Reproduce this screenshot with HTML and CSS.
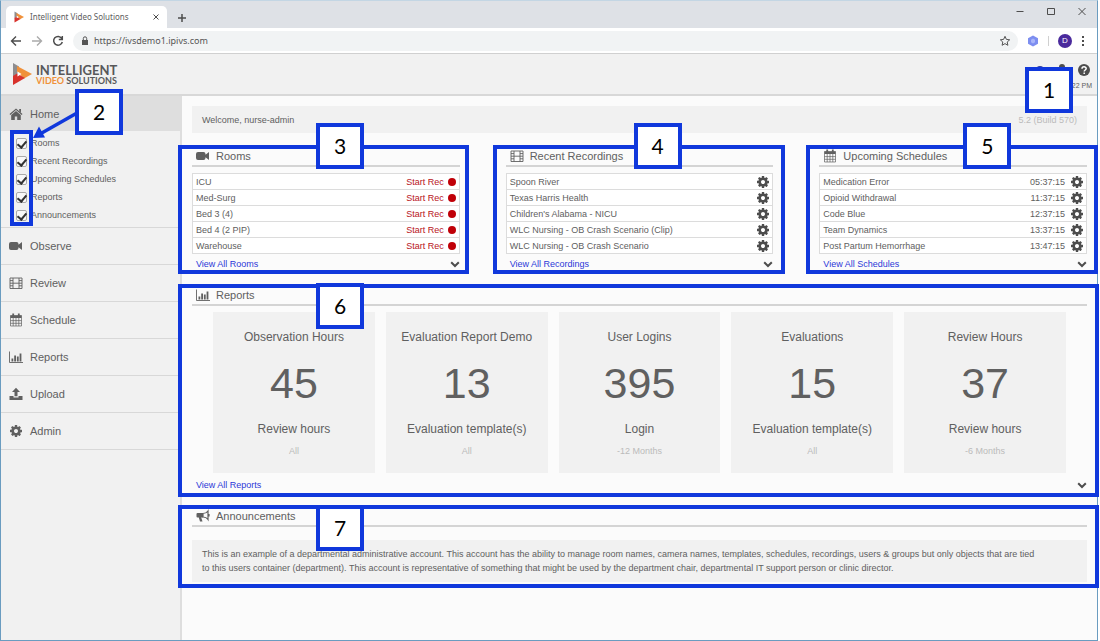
FILE: index.html
```html
<!DOCTYPE html>
<html lang="en">
<head>
<meta charset="utf-8">
<title>Intelligent Video Solutions</title>
<link rel="stylesheet" href="styles.css">
</head>
<body>
<svg class="defs" aria-hidden="true">
  <symbol id="logo" viewBox="0 0 20 22">
    <path d="M1 0 7 3.500V10L1 14z" fill="#8d8d8f"/>
    <path d="M5 3 20 11 12 15.500 5 8.500z" fill="#f0913a"/>
    <path d="M1 13 5 10.500l8 4.500L1 22z" fill="#d8322c"/>
    <path d="M5.500 8.500 9.500 11 5.500 13.500z" fill="#fff"/>
  </symbol>
  <symbol id="gear" viewBox="0 -128 1536 1536">
    <path fill-rule="evenodd" d="M1024 640q0 106-75 181t-181 75-181-75-75-181 75-181 181-75 181 75 75 181zm512-109v222q0 12-8 23t-20 13l-185 28q-19 54-39 91 35 50 107 138 10 12 10 25t-9 23q-27 37-99 108t-94 71q-12 0-26-9l-138-108q-44 23-91 38-16 136-29 186-7 28-36 28h-222q-14 0-24.500-8.500t-11.500-21.500l-28-184q-49-16-90-37l-141 107q-10 9-25 9-14 0-25-11-126-114-165-168-7-10-7-23 0-12 8-23 15-21 51-66.500t54-70.500q-27-50-41-99l-183-27q-13-2-21-12.500t-8-23.500v-222q0-12 8-23t19-13l186-28q14-46 39-92-40-57-107-138-10-12-10-24 0-10 9-23 26-36 98.500-107.500t94.500-71.500q13 0 26 10l138 107q44-23 91-38 16-136 29-186 7-28 36-28h222q14 0 24.500 8.500t11.500 21.500l28 184q49 16 90 37l142-107q9-9 24-9 13 0 25 10 129 119 165 170 7 8 7 22 0 12-8 23-15 21-51 66.500t-54 70.500q26 50 41 98l183 28q13 2 21 12.500t8 23.500z"/>
  </symbol>
  <symbol id="home" viewBox="0 0 14 14"><path d="M7 1.500 13.500 7l-.8.9L7 3.100 1.300 7.900.5 7zM10.200 2h1.800v3.500l-1.800-1.500zM7 3.900l4.800 4V13H8.200V9.500H5.800V13H2.200V7.900z"/></symbol>
  <symbol id="video" viewBox="0 0 14 14"><path d="M2 3h5.500a2 2 0 0 1 2 2v.8L13 3v8L9.500 8.200V9a2 2 0 0 1-2 2H2a2 2 0 0 1-2-2V5a2 2 0 0 1 2-2z"/></symbol>
  <symbol id="film" viewBox="0 0 14 14"><path d="M1 2h12v10.500H1zM4 2v10.500M10 2v10.500M4 7.200h6M1 4.600h3M1 7.200h3M1 9.800h3M10 4.600h3M10 7.200h3M10 9.800h3" fill="none" stroke="currentColor" stroke-width=".9"/></symbol>
  <symbol id="calendar" viewBox="0 0 14 14"><path d="M1.500 2.500h11V5h-11z"/><path d="M1.500 2.500h11v10.500h-11zM4.200 5v8M7 5v8M9.800 5v8M1.500 7.600h11M1.500 10.300h11" fill="none" stroke="currentColor" stroke-width=".7"/><path d="M4.200.5v3M9.800.5v3" stroke="currentColor" stroke-width="1.800"/></symbol>
  <symbol id="chart" viewBox="0 0 14 14"><path d="M.5 1.500v11H14" fill="none" stroke="currentColor" stroke-width=".9"/><path d="M2.500 8.500h1.800v3H2.500zM5.200 5.500H7v6H5.200zM7.900 6.500h1.800v5H7.900zM10.600 3.500h1.800v8h-1.800z"/></symbol>
  <symbol id="upload" viewBox="0 0 14 14"><path d="M7 .8 11 5H8.500v4.200h-3V5H3zM.5 9h4v1.400h5V9h4v4H.5z"/></symbol>
  <symbol id="horn" viewBox="0 0 14 14"><path d="M1.500 4H7v4.500H5.200L6.500 12.500H4L2.800 8.500H1.500A1 1 0 0 1 .5 7.500V5A1 1 0 0 1 1.500 4z"/><path d="M7 4.500c2 0 4-1 5-2.500v8.500c-1-1.500-3-2.500-5-2.500zM13 5v2.500" fill="none" stroke="currentColor" stroke-width="1.200"/></symbol>
  <symbol id="down" viewBox="0 0 10 10"><path d="M1.200 3.200 5 7l3.800-3.800" fill="none" stroke="currentColor" stroke-width="2"/></symbol>
</svg>

<div class="window">
  <div class="tabstrip">
    <div class="tab">
      <svg class="favicon"><use href="#logo"/></svg>
      <span class="tab-title">Intelligent Video Solutions</span>
      <button class="chrome-button" aria-label="Close tab"><svg width="8" height="8" viewBox="0 0 8 8"><path d="M1.500 1.500l5 5M6.500 1.500l-5 5"/></svg></button>
    </div>
    <button class="chrome-button new-tab" aria-label="New tab"><svg width="10" height="10" viewBox="0 0 10 10"><path d="M5 1v8M1 5h8" stroke-width="1.500"/></svg></button>
    <div class="window-buttons">
      <button class="chrome-button" aria-label="Minimize"><svg width="8" height="8" viewBox="0 0 8 8"><path d="M.5 3.500h7"/></svg></button>
      <button class="chrome-button" aria-label="Maximize"><svg width="8" height="8" viewBox="0 0 8 8"><path d="M.5.5h7v6h-7z"/></svg></button>
      <button class="chrome-button" aria-label="Close"><svg width="8" height="8" viewBox="0 0 8 8"><path d="M.5 0l7 7M7.500 0l-7 7"/></svg></button>
    </div>
  </div>

  <div class="toolbar">
    <button class="chrome-button" aria-label="Back"><svg width="12" height="12" viewBox="0 0 12 12"><path d="M11 6H1.500M6 1.500 1.500 6 6 10.500" stroke-width="1.400"/></svg></button>
    <button class="chrome-button muted" aria-label="Forward"><svg width="12" height="12" viewBox="0 0 12 12"><path d="M1 6h9.500M6 1.500 10.500 6 6 10.500" stroke-width="1.400"/></svg></button>
    <button class="chrome-button" aria-label="Reload"><svg width="12" height="12" viewBox="0 0 12 12"><path d="M9.700 3.300A4.400 4.400 0 1 0 10.300 7M10.300 1v3.500H6.800" stroke-width="1.500"/></svg></button>
    <div class="address">
      <svg width="8" height="10" viewBox="0 0 8 10"><path d="M1 4h6v5H1z" fill="#555"/><path d="M2.300 4V2.500a1.700 1.700 0 0 1 3.400 0V4" fill="none" stroke="#555"/></svg>
      <input class="url" aria-label="Address" value="https://ivsdemo1.ipivs.com">
      <svg width="12" height="12" viewBox="0 0 12 12"><path d="M6 1.300l1.400 3.100 3.300.4-2.500 2.200.7 3.300L6 8.600l-2.900 1.700.7-3.300L1.300 4.800l3.300-.4z" fill="none" stroke="#555"/></svg>
    </div>
    <svg width="12" height="12" viewBox="0 0 12 12"><path d="M6 .5 11 3.200v5.600L6 11.500 1 8.800V3.200z" fill="#7d8ef0"/><path d="M6 3.500 8 4.700v2.600L6 8.500 4 7.300V4.700z" fill="#a9b5fa"/></svg>
    <span class="divider"></span>
    <span class="avatar">D</span>
    <button class="chrome-button" aria-label="Menu"><svg width="4" height="12" viewBox="0 0 4 12"><path d="M1 2h2M1 6h2M1 10h2" stroke-width="2"/></svg></button>
  </div>

  <header class="app-header">
    <a class="brand" href="#" aria-label="Intelligent Video Solutions">
      <svg class="brand-mark"><use href="#logo"/></svg>
      <span class="brand-text">
        <span class="brand-top">INTELLIGENT</span>
        <span class="brand-bottom"><span class="accent">VIDEO</span> SOLUTIONS</span>
      </span>
    </a>
    <div class="header-tools">
      <div class="header-icons">
        <svg width="12" height="12" viewBox="0 0 12 12"><circle cx="6" cy="6" r="4" fill="#2f3a9a"/></svg>
        <svg width="12" height="12" viewBox="0 0 12 12"><circle cx="6" cy="3" r="3"/><path d="M0 12c0-7 12-7 12 0z"/></svg>
        <svg width="12" height="12" viewBox="0 0 12 12"><circle cx="6" cy="6" r="6"/><path d="M4 4.800c0-2.600 4.200-2.500 4.200-.2C8.200 6 6.200 6 6.200 7.500M6.200 8.500V10" fill="none" stroke="#fff" stroke-width="1.500"/></svg>
      </div>
      <span class="clock">22 PM</span>
    </div>
    <span class="callout callout-1">1</span>
  </header>

  <div class="app-body">
    <nav class="sidebar">
      <a class="nav-item current" href="#"><svg class="icon"><use href="#home"/></svg>Home</a>
      <div class="widgets">
        <label><input type="checkbox" checked>Rooms</label>
        <label><input type="checkbox" checked>Recent Recordings</label>
        <label><input type="checkbox" checked>Upcoming Schedules</label>
        <label><input type="checkbox" checked>Reports</label>
        <label><input type="checkbox" checked>Announcements</label>
        <span class="frame frame-checks"></span>
      </div>
      <a class="nav-item" href="#"><svg class="icon"><use href="#video"/></svg>Observe</a>
      <a class="nav-item" href="#"><svg class="icon"><use href="#film"/></svg>Review</a>
      <a class="nav-item" href="#"><svg class="icon"><use href="#calendar"/></svg>Schedule</a>
      <a class="nav-item" href="#"><svg class="icon"><use href="#chart"/></svg>Reports</a>
      <a class="nav-item" href="#"><svg class="icon"><use href="#upload"/></svg>Upload</a>
      <a class="nav-item" href="#"><svg class="icon icon-gear"><use href="#gear"/></svg>Admin</a>
      <svg class="arrow" width="46" height="28" viewBox="0 0 46 28"><path d="M45 2 8 23" stroke="#1038dc" stroke-width="3.500"/><path d="M1 27 7 15.500 13 26.500z" fill="#1038dc"/></svg>
      <span class="callout callout-2">2</span>
    </nav>

    <main class="content">
      <div class="welcome"><span>Welcome, nurse-admin</span><span class="build">5.2 (Build 570)</span></div>

      <div class="panels">
        <section class="panel">
          <span class="frame frame-rooms"></span>
          <h2><svg class="icon"><use href="#video"/></svg>Rooms</h2>
          <ul class="rows">
            <li><span class="name">ICU</span><button class="record">Start Rec</button></li>
            <li><span class="name">Med-Surg</span><button class="record">Start Rec</button></li>
            <li><span class="name">Bed 3 (4)</span><button class="record">Start Rec</button></li>
            <li><span class="name">Bed 4 (2 PIP)</span><button class="record">Start Rec</button></li>
            <li><span class="name">Warehouse</span><button class="record">Start Rec</button></li>
          </ul>
          <div class="panel-foot"><a href="#">View All Rooms</a><button class="icon-button" aria-label="Expand rooms"><svg class="chevron"><use href="#down"/></svg></button></div>
          <span class="callout callout-3">3</span>
        </section>

        <section class="panel">
          <span class="frame frame-recordings"></span>
          <h2><svg class="icon"><use href="#film"/></svg>Recent Recordings</h2>
          <ul class="rows">
            <li><span class="name">Spoon River</span><button class="icon-button" aria-label="Options"><svg class="gear"><use href="#gear"/></svg></button></li>
            <li><span class="name">Texas Harris Health</span><button class="icon-button" aria-label="Options"><svg class="gear"><use href="#gear"/></svg></button></li>
            <li><span class="name">Children's Alabama - NICU</span><button class="icon-button" aria-label="Options"><svg class="gear"><use href="#gear"/></svg></button></li>
            <li><span class="name">WLC Nursing - OB Crash Scenario (Clip)</span><button class="icon-button" aria-label="Options"><svg class="gear"><use href="#gear"/></svg></button></li>
            <li><span class="name">WLC Nursing - OB Crash Scenario</span><button class="icon-button" aria-label="Options"><svg class="gear"><use href="#gear"/></svg></button></li>
          </ul>
          <div class="panel-foot"><a href="#">View All Recordings</a><button class="icon-button" aria-label="Expand recordings"><svg class="chevron"><use href="#down"/></svg></button></div>
          <span class="callout callout-4">4</span>
        </section>

        <section class="panel">
          <span class="frame frame-schedules"></span>
          <h2><svg class="icon"><use href="#calendar"/></svg>Upcoming Schedules</h2>
          <ul class="rows">
            <li><span class="name">Medication Error</span><time>05:37:15</time><button class="icon-button" aria-label="Options"><svg class="gear"><use href="#gear"/></svg></button></li>
            <li><span class="name">Opioid Withdrawal</span><time>11:37:15</time><button class="icon-button" aria-label="Options"><svg class="gear"><use href="#gear"/></svg></button></li>
            <li><span class="name">Code Blue</span><time>12:37:15</time><button class="icon-button" aria-label="Options"><svg class="gear"><use href="#gear"/></svg></button></li>
            <li><span class="name">Team Dynamics</span><time>13:37:15</time><button class="icon-button" aria-label="Options"><svg class="gear"><use href="#gear"/></svg></button></li>
            <li><span class="name">Post Partum Hemorrhage</span><time>13:47:15</time><button class="icon-button" aria-label="Options"><svg class="gear"><use href="#gear"/></svg></button></li>
          </ul>
          <div class="panel-foot"><a href="#">View All Schedules</a><button class="icon-button" aria-label="Expand schedules"><svg class="chevron"><use href="#down"/></svg></button></div>
          <span class="callout callout-5">5</span>
        </section>
      </div>

      <section class="panel reports">
        <span class="frame frame-wide"></span>
        <h2><svg class="icon"><use href="#chart"/></svg>Reports</h2>
        <div class="cards">
          <article class="card"><h3>Observation Hours</h3><strong>45</strong><p>Review hours</p><small>All</small></article>
          <article class="card"><h3>Evaluation Report Demo</h3><strong>13</strong><p>Evaluation template(s)</p><small>All</small></article>
          <article class="card"><h3>User Logins</h3><strong>395</strong><p>Login</p><small>-12 Months</small></article>
          <article class="card"><h3>Evaluations</h3><strong>15</strong><p>Evaluation template(s)</p><small>All</small></article>
          <article class="card"><h3>Review Hours</h3><strong>37</strong><p>Review hours</p><small>-6 Months</small></article>
        </div>
        <div class="panel-foot"><a href="#">View All Reports</a><button class="icon-button" aria-label="Expand reports"><svg class="chevron"><use href="#down"/></svg></button></div>
        <span class="callout callout-6">6</span>
      </section>

      <section class="panel announcements">
        <span class="frame frame-wide"></span>
        <h2><svg class="icon"><use href="#horn"/></svg>Announcements</h2>
        <p class="notice">This is an example of a departmental administrative account. This account has the ability to manage room names, camera names, templates, schedules, recordings, users &amp; groups but only objects that are tied<br>to this users container (department). This account is representative of something that might be used by the department chair, departmental IT support person or clinic director.</p>
        <span class="callout callout-7">7</span>
      </section>
    </main>
  </div>
</div>
</body>
</html>
```
FILE: styles.css
```css
* { box-sizing: border-box; }

body {
  margin: 0;
  background: #fff;
  color: #606060;
  font: 9px/16px "Liberation Sans", Arial, sans-serif;
}

a { color: inherit; text-decoration: none; }
button { padding: 0; border: 0; background: none; color: inherit; font: inherit; }
svg { display: block; flex: none; }
ul, p, h2, h3 { margin: 0; padding: 0; font-weight: normal; }
.defs { position: absolute; width: 0; height: 0; }

.window {
  display: flex;
  flex-direction: column;
  min-height: 100vh;
  margin-right: 2px;
  border: 1px solid #6a9cc0;
  border-top-color: #c3d6e4;
}

/* Browser chrome */
.tabstrip {
  display: flex;
  align-items: center;
  height: 27px;
  padding-left: 5px;
  background: #dee1e6;
}
.tab {
  display: flex;
  align-items: center;
  align-self: flex-end;
  width: 161px;
  height: 22px;
  padding: 0 7px 0 8px;
  border-radius: 5px 5px 0 0;
  background: #fff;
}
.favicon { width: 10px; height: 12px; }
.tab-title {
  flex: 1;
  margin-left: 6px;
  font: 8px/16px "Noto Sans", sans-serif;
  white-space: nowrap;
}
.chrome-button { display: flex; color: #4d4d4d; }
.chrome-button svg { fill: none; stroke: currentColor; }
.chrome-button.muted { color: #aaa; }
.new-tab { margin: 6px 0 0 10px; }
.window-buttons {
  display: flex;
  gap: 23px;
  margin: 0 11px 6px auto;
}
.toolbar {
  display: flex;
  align-items: center;
  gap: 9px;
  height: 26px;
  padding: 0 12px 0 9px;
  border-bottom: 1px solid #d0d0d0;
  background: #fff;
}
.address {
  display: flex;
  flex: 1;
  align-items: center;
  gap: 5px;
  height: 20px;
  padding: 0 7px 0 8px;
  border-radius: 10px;
  background: #f1f3f4;
}
.url {
  flex: 1;
  min-width: 0;
  padding: 0;
  border: 0;
  background: none;
  color: #555;
  font: 9px/16px "Noto Sans", sans-serif;
}
.divider { width: 1px; height: 10px; background: #d0d0d0; }
.avatar {
  width: 14px;
  height: 14px;
  border-radius: 50%;
  background: #4a2a9c;
  color: #fff;
  font-size: 8px;
  line-height: 14px;
  text-align: center;
}

/* Application header */
.app-header {
  position: relative;
  display: flex;
  align-items: center;
  justify-content: space-between;
  height: 42px;
  padding: 0 5px 0 11px;
  border-bottom: 2px solid #d8d8d8;
  background: #f1f1f1;
}
.brand { display: flex; align-items: center; gap: 4px; }
.brand-mark { width: 20px; height: 22px; }
.brand-text {
  display: flex;
  flex-direction: column;
  color: #58585a;
  font-family: Lato, sans-serif;
  font-weight: bold;
}
.brand-top { font-size: 13px; line-height: 12px; }
.brand-bottom { font-size: 9px; line-height: 9px; }
.accent { color: #f0913a; }
.header-tools {
  display: flex;
  flex-direction: column;
  align-items: flex-end;
  align-self: flex-end;
  gap: 2px;
}
.header-icons { display: flex; gap: 10px; padding-right: 2px; fill: #4d4d4d; }
.clock { font-size: 7px; line-height: 16px; }

.app-body { display: flex; flex: 1; }

/* Sidebar */
.sidebar {
  position: relative;
  width: 181px;
  flex: none;
  border-right: 2px solid #dedede;
  background: #f1f1f1;
}
.icon { width: 14px; height: 14px; fill: currentColor; }
.icon-gear { padding: 1px; }
.nav-item {
  display: flex;
  align-items: center;
  gap: 7px;
  height: 37px;
  padding-left: 8px;
  border-bottom: 1px solid #d8d8d8;
  font-size: 11px;
}
.nav-item.current { height: 35px; border: 0; background: #dedede; }
.widgets {
  position: relative;
  padding: 3px 0 3px 15px;
  border-bottom: 1px solid #d8d8d8;
}
.widgets label { display: flex; align-items: center; gap: 4px; height: 18px; }
.widgets input {
  width: 11px;
  height: 11px;
  margin: 0;
  appearance: none;
  border: 1px solid #aaa;
  border-radius: 2px;
  background: #f8f8f8;
}
.widgets input:checked::after {
  content: "";
  display: block;
  width: 4px;
  height: 7px;
  margin: 0 auto;
  border: solid #333;
  border-width: 0 2px 2px 0;
  transform: rotate(40deg);
}

/* Dashboard */
.content {
  flex: 1;
  min-width: 0;
  padding: 10px 10px 0;
  background: #fbfbfb;
}
.welcome {
  display: flex;
  align-items: center;
  justify-content: space-between;
  height: 27px;
  padding: 0 10px;
  background: #f1f1f1;
}
.build { color: #bbb; }
.panels {
  display: grid;
  grid-template-columns: repeat(3, 1fr);
  gap: 46px;
  margin-top: 13px;
}
.panel { position: relative; }
.panel h2 {
  display: flex;
  align-items: center;
  gap: 6px;
  height: 21px;
  padding-left: 4px;
  border-bottom: 2px solid #d4d4d4;
  font-size: 11px;
}
.rows {
  margin-top: 6px;
  border: 1px solid #dcdcdc;
  border-top: 0;
  background: #fff;
  list-style: none;
}
.rows li {
  display: flex;
  align-items: center;
  height: 16px;
  padding: 0 3px;
  border-top: 1px solid #dcdcdc;
}
.name { flex: 1; }
.rows time { margin-right: 6px; }
.record { display: flex; align-items: center; gap: 4px; color: #b8141c; }
.record::after {
  content: "";
  width: 8px;
  height: 8px;
  border-radius: 50%;
  background: #c00008;
}
.gear { width: 12px; height: 12px; fill: #4d4d4d; }
.panel-foot {
  display: flex;
  align-items: center;
  justify-content: space-between;
  height: 20px;
  padding-left: 4px;
  color: #4d4d4d;
}
.panel-foot a { color: #2c38d8; }
.chevron { width: 10px; height: 10px; }

.reports { margin-top: 11px; }
.reports .panel-foot { height: 24px; }
.cards {
  display: grid;
  grid-template-columns: repeat(5, 1fr);
  gap: 11px;
  margin: 6px 21px 0;
}
.card {
  display: flex;
  flex-direction: column;
  height: 161px;
  padding-top: 17px;
  background: #f1f1f1;
  font-size: 12px;
  text-align: center;
}
.card h3 { font-size: 12px; }
.card strong {
  margin: 16px 0;
  font-size: 43px;
  font-weight: normal;
  line-height: 44px;
}
.card small { margin-top: 6px; color: #bbb; font-size: 9px; }

.announcements { margin-top: 9px; }
.notice {
  margin-top: 13px;
  padding: 7px 10px;
  background: #f1f1f1;
  line-height: 14px;
}

/* Numbered annotations laid over the interface */
.frame {
  position: absolute;
  z-index: 1;
  border: 4px solid #1038dc;
  pointer-events: none;
}
.frame-checks { inset: -1px auto 1px 9px; width: 23px; }
.frame-rooms { inset: -1px -9px 0 -14px; }
.frame-recordings { inset: -1px -12px 0 -13px; }
.frame-schedules { inset: -1px -11px 0 -13px; }
.frame-wide { inset: -1px -12px 0 -14px; }
.announcements .frame-wide { bottom: -6px; }
.callout {
  position: absolute;
  z-index: 2;
  width: 48px;
  height: 46px;
  border: 4px solid #1038dc;
  background: #fff;
  color: #000;
  font: 21px/38px Lato, sans-serif;
  text-align: center;
}
.callout-1 { top: 13px; right: 24px; }
.callout-2 { top: -7px; left: 74px; }
.callout-3 { top: -23px; left: 124px; }
.callout-4 { top: -23px; left: 128px; }
.callout-5 { top: -23px; left: 144px; }
.callout-6 { top: -2px; left: 124px; }
.callout-7 { top: -1px; left: 124px; }
.arrow { position: absolute; top: 15px; left: 31px; z-index: 2; }
```
